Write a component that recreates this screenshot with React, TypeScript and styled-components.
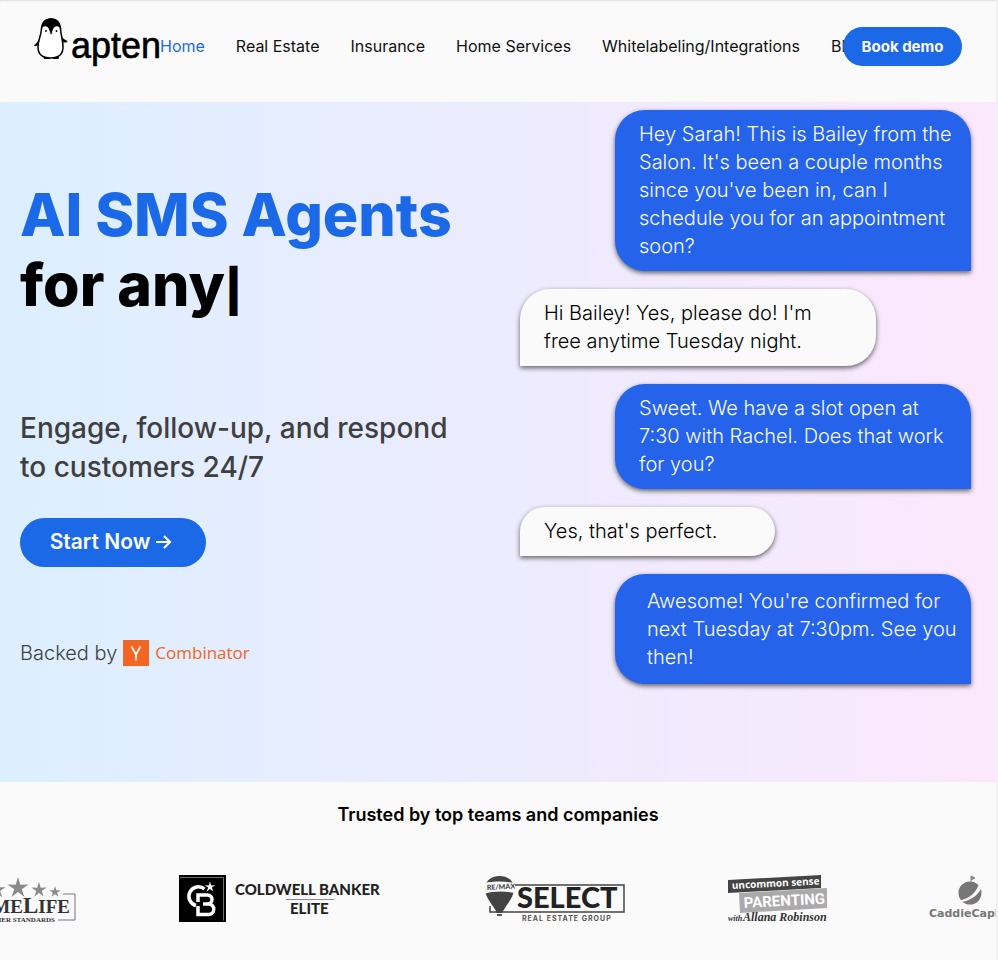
import React from "react";
import styled, { createGlobalStyle } from "styled-components";

const GlobalStyle = createGlobalStyle`
  *, *::before, *::after { box-sizing: border-box; }
  body {
    margin: 0;
    background: #fafafa;
    color: #000;
    font-family: Inter, "Liberation Sans", sans-serif;
    overflow-x: hidden;
  }
  h1, h2, p, ul { margin: 0; padding: 0; }
  a { color: inherit; text-decoration: none; }
`;

const Page = styled.div`
  min-height: 100vh;
  border-right: 2px solid #f1f1f1;
  overflow: hidden;
`;

const Header = styled.header`
  display: flex;
  align-items: flex-start;
  height: 102px;
  padding: 0 34px;
  background: #fafafa;
  box-shadow: inset 0 2px 2px -1px #dcdcdc;
`;

const Brand = styled.a`
  flex: none;
  display: flex;
  width: 126px;
  padding-top: 16px;
`;

const Nav = styled.nav`
  flex: 1;
  min-width: 0;
  padding-top: 34px;
`;

const NavList = styled.ul`
  display: flex;
  gap: 31px;
  list-style: none;
  white-space: nowrap;
`;

const NavLink = styled.a<{ $active?: boolean }>`
  font-size: 16px;
  line-height: 24px;
  color: ${(p) => (p.$active ? "#1d6ae5" : "#111")};
`;

const PillButton = styled.button<{ $large?: boolean }>`
  flex: none;
  border: 0;
  border-radius: 25px;
  background: #1b69e6;
  color: #fafafa;
  font-family: inherit;
  font-weight: ${(p) => (p.$large ? 600 : 700)};
  font-size: ${(p) => (p.$large ? 21 : 15)}px;
  width: ${(p) => (p.$large ? 186 : 119)}px;
  height: ${(p) => (p.$large ? 49 : 39)}px;
  padding: 0;
  cursor: pointer;
`;

const StartButton = styled(PillButton)`
  display: flex;
  align-items: center;
  justify-content: center;
  gap: 6px;
  margin-top: 31px;
  padding: 0 4px 2px 0;
`;

const HeaderAction = styled.div`
  z-index: 1;
  margin-top: 27px;
`;

const Hero = styled.section`
  display: grid;
  grid-template-columns: 1fr 1fr;
  min-height: 680px;
  background: linear-gradient(90deg, #dceffe 0%, #e5edff 28%, #eeebfe 55%, #fce8fd 100%);
`;

const Pitch = styled.div`
  padding: 78px 0 0 20px;
`;

const Title = styled.h1`
  min-height: 180px;
  font-weight: 800;
  font-size: 59px;
  line-height: 70px;
  white-space: nowrap;
`;

const Accent = styled.span`
  display: block;
  color: #1b69e6;
`;

const Caret = styled.span`
  font-weight: 900;
  font-size: 42px;
  line-height: 1;
`;

const Subtitle = styled.h2`
  margin-top: 49px;
  font-weight: 500;
  font-size: 28px;
  line-height: 39px;
  color: #3f3f3f;
  white-space: pre-line;
`;

const Backed = styled.p`
  display: flex;
  align-items: center;
  margin-top: 73px;
  font-weight: 300;
  font-size: 20px;
  line-height: 26px;
  color: #3f3f3f;
`;

const YMark = styled.svg`
  flex: none;
  margin: 0 6px;
`;

const Combinator = styled.span`
  font-family: "Open Sans", "Noto Sans", sans-serif;
  font-weight: 400;
  font-size: 17px;
  line-height: 24px;
  color: #f26522;
`;

const Chat = styled.div`
  display: flex;
  flex-direction: column;
  align-items: flex-start;
  gap: 18px;
  padding: 8px 25px 0 22px;
`;

const Bubble = styled.p<{ $sent?: boolean; $short?: boolean; $roomy?: boolean }>`
  align-self: ${(p) => (p.$sent ? "flex-end" : "flex-start")};
  width: ${(p) => (p.$short ? 255 : 356)}px;
  padding: ${(p) => (p.$roomy ? "13px 4px 13px 32px" : "10px 16px 11px 24px")};
  border-radius: ${(p) => (p.$sent ? "30px 30px 0 30px" : "30px 30px 30px 0")};
  background: ${(p) => (p.$sent ? "#2563eb" : "#fafafa")};
  color: ${(p) => (p.$sent ? "#fafafa" : "#000")};
  box-shadow: 0 2px 5px rgba(0, 0, 0, 0.6);
  font-weight: 300;
  font-size: 20px;
  line-height: 28px;
  white-space: pre-line;
`;

const Trusted = styled.section`
  padding-top: 21px;
`;

const TrustedTitle = styled.h2`
  font-weight: 600;
  font-size: 18px;
  line-height: 24px;
  text-align: center;
`;

const Marquee = styled.div`
  display: flex;
  gap: 101px;
  margin: 48px 0 0 -64px;
  overflow: hidden;
`;

const Logo = styled.svg`
  flex: none;
  display: block;
`;

const navItems = [
  "Home",
  "Real Estate",
  "Insurance",
  "Home Services",
  "Whitelabeling/Integrations",
  "Blog",
];

const messages = [
  { sent: true, text: "Hey Sarah! This is Bailey from the\nSalon. It's been a couple months\nsince you've been in, can I\nschedule you for an appointment\nsoon?" },
  { text: "Hi Bailey! Yes, please do! I'm\nfree anytime Tuesday night." },
  { sent: true, text: "Sweet. We have a slot open at\n7:30 with Rachel. Does that work\nfor you?" },
  { short: true, text: "Yes, that's perfect." },
  { sent: true, roomy: true, text: "Awesome! You're confirmed for\nnext Tuesday at 7:30pm. See you\nthen!" },
];

const star = (cx: number, cy: number, r: number) =>
  Array.from({ length: 10 }, (_, i) => {
    const radius = i % 2 ? r * 0.36 : r;
    const a = (Math.PI / 5) * i - Math.PI / 2;
    return `${cx + radius * Math.cos(a)},${cy + radius * Math.sin(a)}`;
  }).join(" ");

const AptenLogo = () => (
  <Logo width="126" height="54" viewBox="0 0 126 54" role="img" aria-label="apten">
    <path d="M8 18 C5 24 3 27 0 29.500 C1 31 3 30 5 28Z M26 18 C28 22 31 24 33.500 25 C33 27 30 27 28 25Z" fill="#000" />
    <path d="M9.500 41 10 43h5l1-1.500z M18.500 41.500 19.500 43h5l.5-2z" fill="#000" />
    <path d="M17 3 C11 3 8 7 7.500 13 C7 20 4 24 4 31 C4 39 9 42 16.500 42 C24 42 29 39 29 31 C29 24 27 20 26.500 13 C26 7 23 3 17 3Z" fill="#fff" stroke="#000" strokeWidth="1.500" />
    <path d="M17 2.200 C11 2.200 7.500 6 6.500 14 C8 9.500 14 9 15 13.500 L17 18 L19 13.500 C20 9 26 9.500 27.500 14 C26.500 6 23 2.200 17 2.200Z" fill="#000" />
    <circle cx="12" cy="15" r=".9" />
    <circle cx="22.500" cy="15" r=".9" />
    <path d="M16 16.500h2.400l-1.200 2z" />
    <text x="37" y="42" fontFamily="Liberation Sans, sans-serif" fontSize="36" stroke="#000" strokeWidth=".6">apten</text>
  </Logo>
);

const HomeLifeLogo = () => (
  <Logo width="141" height="48" viewBox="0 0 141 48" role="img" aria-label="HomeLife Higher Standards">
    <g fill="#8a8a8a">
      <polygon points={star(61, 15, 9)} />
      <polygon points={star(82, 13, 11)} />
      <polygon points={star(103, 15, 8)} />
      <polygon points={star(119, 17, 6)} />
    </g>
    <path d="M127 19h12v26h-17" fill="none" stroke="#777" />
    <g fontFamily="Liberation Serif, serif" fill="#333">
      <text x="134" y="38" fontSize="19" fontWeight="700" textAnchor="end">HOME<tspan fontSize="23">L</tspan>IFE</text>
      <text x="119" y="47" fontSize="7" fontWeight="700" textAnchor="end">HIGHER STANDARDS</text>
    </g>
  </Logo>
);

const ColdwellLogo = () => (
  <Logo width="205" height="48" viewBox="0 0 205 48" role="img" aria-label="Coldwell Banker Elite">
    <path d="M1 0h47v47H1z" />
    <path d="M2 2.500h43.500v43" fill="none" stroke="#999" strokeWidth=".7" />
    <path d="M26.500 14 A9.500 9.500 0 1 0 18 30.500" fill="none" stroke="#fff" strokeWidth="3.500" />
    <path d="M20 27v-7h9.500a4.500 4.500 0 0 1 0 9H25M29.500 29h1a5 5 0 0 1 0 10.500H20V31" fill="none" stroke="#fff" strokeWidth="3.500" />
    <polygon points={star(32, 12, 5.5)} fill="#fff" />
    <g fontFamily="Lato, sans-serif" fontWeight="900" fill="#222">
      <text x="57" y="20" fontSize="15">COLDWELL BANKER</text>
      <text x="112" y="39" fontSize="15">ELITE</text>
    </g>
    <path d="M108 24.500h48" stroke="#888" />
  </Logo>
);

const SelectLogo = () => (
  <Logo width="143" height="48" viewBox="0 0 143 48" role="img" aria-label="RE/MAX Select Real Estate Group">
    <path d="M25 10h115v27H6v-6" fill="none" stroke="#444" strokeWidth="1.500" />
    <path d="M1 14C1 5 8 1 15.500 1S30 5 30 14C30 23 21 31 18 38h-5C10 31 1 23 1 14Z" fill="#444" />
    <path d="M0 8C9 6 22 6 31 8v10C22 16 9 16 0 19Z" fill="#fafafa" />
    <path d="M13 39h5v2h-5z" fill="#555" />
    <text x="3" y="15" transform="rotate(-3 3 15)" fontFamily="Lato, sans-serif" fontSize="7" fontWeight="900" fill="#444">RE/MAX</text>
    <text x="33" y="33" fontFamily="Lato, sans-serif" fontSize="29" fontWeight="900" fill="#222">SELECT</text>
    <text x="38" y="46" fontFamily="Inter, sans-serif" fontSize="7" letterSpacing="1" fontWeight="700" fill="#555">REAL ESTATE GROUP</text>
  </Logo>
);

const ParentingLogo = () => (
  <Logo width="100" height="48" viewBox="0 0 100 48" role="img" aria-label="Uncommon Sense Parenting with Allana Robinson">
    <path d="M0 5 93 0v13L0 18Z" fill="#444" />
    <path d="M11 18 99 13v20L12 38Z" fill="#aaa" />
    <text x="4" y="14" transform="rotate(-3 4 14)" fontFamily="Open Sans, sans-serif" fontSize="10" fontWeight="700" fill="#fff">uncommon sense</text>
    <text x="16" y="33" transform="rotate(-3 16 33)" fontFamily="Roboto, sans-serif" fontSize="15" fontWeight="700" fill="#fff">PARENTING</text>
    <text x="0" y="46" fontFamily="Liberation Serif, serif" fontSize="8" fontWeight="700" fontStyle="italic" fill="#333">with</text>
    <text x="15" y="46" fontFamily="Liberation Serif, serif" fontSize="12" fontWeight="700" fontStyle="italic" fill="#333">Allana Robinson</text>
  </Logo>
);

const CaddieLogo = () => (
  <Logo width="101" height="48" viewBox="0 0 101 48" role="img" aria-label="CaddieCapital">
    <circle cx="41" cy="18" r="11.500" fill="#777" />
    <path d="M27 26C38 25 46 20 50 9l3 3C49 21 40 27 28 27.500Z" fill="#fafafa" />
    <path d="M42 8V1l4 2-4 2" fill="#888" stroke="#888" />
    <text x="0" y="42" fontFamily="DejaVu Sans, sans-serif" fontSize="11" fontWeight="700" fill="#777">CaddieCapital</text>
  </Logo>
);

export default function App() {
  return (
    <>
      <GlobalStyle />
      <Page>
        <Header>
          <Brand href="#home"><AptenLogo /></Brand>
          <Nav>
            <NavList>
              {navItems.map((item, i) => (
                <li key={item}><NavLink href="#" $active={i === 0}>{item}</NavLink></li>
              ))}
            </NavList>
          </Nav>
          <HeaderAction><PillButton type="button">Book demo</PillButton></HeaderAction>
        </Header>
        <main>
          <Hero>
            <Pitch>
              <Title><Accent>AI SMS Agents</Accent>for any<Caret>|</Caret></Title>
              <Subtitle>{"Engage, follow-up, and respond\nto customers 24/7"}</Subtitle>
              <StartButton type="button" $large>
                Start Now
                <svg width="16" height="16" viewBox="0 0 16 16" fill="none" stroke="currentColor" strokeWidth="2.200" aria-hidden="true">
                  <path d="M0 8h14M8 2l6 6-6 6" />
                </svg>
              </StartButton>
              <Backed>
                Backed by
                <YMark width="26" height="26" viewBox="0 0 26 26" role="img" aria-label="Y">
                  <path d="M0 0h26v26H0z" fill="#f26522" />
                  <path d="M8.500 6.500 13 14.500 17.500 6.500M13 14v6.500" fill="none" stroke="#fff" strokeWidth="1.600" />
                </YMark>
                <Combinator>Combinator</Combinator>
              </Backed>
            </Pitch>
            <Chat>
              {messages.map((m) => (
                <Bubble key={m.text} $sent={m.sent} $short={m.short} $roomy={m.roomy}>{m.text}</Bubble>
              ))}
            </Chat>
          </Hero>
          <Trusted>
            <TrustedTitle>Trusted by top teams and companies</TrustedTitle>
            <Marquee>
              <HomeLifeLogo />
              <ColdwellLogo />
              <SelectLogo />
              <ParentingLogo />
              <CaddieLogo />
            </Marquee>
          </Trusted>
        </main>
      </Page>
    </>
  );
}
